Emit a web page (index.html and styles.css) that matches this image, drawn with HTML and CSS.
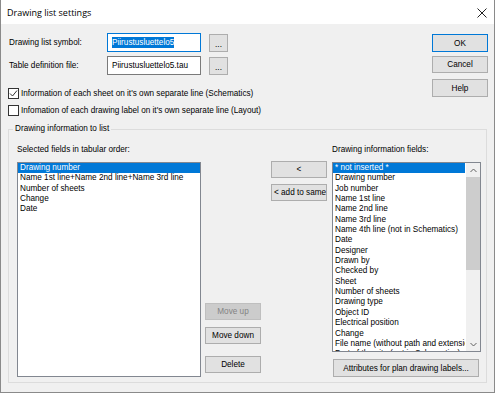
FILE: index.html
```html
<!DOCTYPE html>
<html lang="en">
<head>
    <meta charset="UTF-8">
    <title>Drawing list settings</title>
    <link rel="stylesheet" href="styles.css">
</head>
<body>
    <div class="window">
        <div class="title-bar">
            <div class="title">Drawing list settings</div>
            <svg class="close" width="10" height="10" viewBox="0 0 10 10">
                <path d="M0.5 0.5 L9.5 9.5 M9.5 0.5 L0.5 9.5" stroke="#222" stroke-width="1" fill="none"/>
            </svg>
        </div>
        <div class="content">
            <div class="top">
                <div class="form">
                    <div class="field-row">
                        <div class="field-label">Drawing list symbol:</div>
                        <div class="input focused"><span class="selected-text">Piirustusluettelo5</span></div>
                        <button class="btn browse">...</button>
                    </div>
                    <div class="field-row second">
                        <div class="field-label">Table definition file:</div>
                        <div class="input">Piirustusluettelo5.tau</div>
                        <button class="btn browse">...</button>
                    </div>
                    <div class="check-row first">
                        <div class="checkbox">
                            <svg width="9" height="9" viewBox="0 0 9 9">
                                <path d="M1 4.5 L3.5 7 L8 1.5" stroke="#333" stroke-width="1" fill="none"/>
                            </svg>
                        </div>
                        <div class="check-label">Information of each sheet on it's own separate line (Schematics)</div>
                    </div>
                    <div class="check-row">
                        <div class="checkbox"></div>
                        <div class="check-label">Infomation of each drawing label on it's own separate line (Layout)</div>
                    </div>
                </div>
                <div class="side-buttons">
                    <button class="btn side default">OK</button>
                    <button class="btn side cancel">Cancel</button>
                    <button class="btn side help">Help</button>
                </div>
            </div>

            <fieldset class="group">
                <legend class="group-title">Drawing information to list</legend>
                <div class="group-body">
                    <div class="col col-selected">
                        <div class="col-label">Selected fields in tabular order:</div>
                        <div class="list list-selected">
                            <div class="item active">Drawing number</div>
                            <div class="item">Name 1st line+Name 2nd line+Name 3rd line</div>
                            <div class="item">Number of sheets</div>
                            <div class="item">Change</div>
                            <div class="item">Date</div>
                        </div>
                    </div>
                    <div class="col col-move">
                        <button class="btn small move-up" disabled>Move up</button>
                        <button class="btn small move-down">Move down</button>
                        <button class="btn small delete">Delete</button>
                    </div>
                    <div class="col col-add">
                        <button class="btn small add">&lt;</button>
                        <button class="btn small add-same">&lt; add to same</button>
                    </div>
                    <div class="col col-fields">
                        <div class="col-label">Drawing information fields:</div>
                        <div class="list list-fields">
                            <div class="items">
                                <div class="item active">* not inserted *</div>
                                <div class="item">Drawing number</div>
                                <div class="item">Job number</div>
                                <div class="item">Name 1st line</div>
                                <div class="item">Name 2nd line</div>
                                <div class="item">Name 3rd line</div>
                                <div class="item">Name 4th line (not in Schematics)</div>
                                <div class="item">Date</div>
                                <div class="item">Designer</div>
                                <div class="item">Drawn by</div>
                                <div class="item">Checked by</div>
                                <div class="item">Sheet</div>
                                <div class="item">Number of sheets</div>
                                <div class="item">Drawing type</div>
                                <div class="item">Object ID</div>
                                <div class="item">Electrical position</div>
                                <div class="item">Change</div>
                                <div class="item">File name (without path and extension)</div>
                                <div class="item">Part of the site (not in Schematics)</div>
                            </div>
                            <div class="scrollbar">
                                <div class="arrow">
                                    <svg width="7" height="5" viewBox="0 0 7 5">
                                        <path d="M0.5 4 L3.5 1 L6.5 4" stroke="#606060" stroke-width="1" fill="none"/>
                                    </svg>
                                </div>
                                <div class="track"><div class="thumb"></div></div>
                                <div class="arrow">
                                    <svg width="7" height="5" viewBox="0 0 7 5">
                                        <path d="M0.5 1 L3.5 4 L6.5 1" stroke="#606060" stroke-width="1" fill="none"/>
                                    </svg>
                                </div>
                            </div>
                        </div>
                        <button class="btn attributes">Attributes for plan drawing labels...</button>
                    </div>
                </div>
            </fieldset>
        </div>
    </div>
</body>
</html>
```

FILE: styles.css
```css
body {
    margin: 0;
    width: 495px;
    height: 393px;
    overflow: hidden;
    font-family: "Liberation Sans", Arial, sans-serif;
    font-size: 8.2px;
    color: #000;
}
.window {
    width: 495px;
    height: 393px;
    box-sizing: border-box;
    border: 1px solid #8a8a8a;
    border-top: none;
    background-color: #f0f0f0;
    display: flex;
    flex-direction: column;
}
.title-bar {
    height: 24px;
    background-color: #fff;
    display: flex;
    align-items: center;
    justify-content: space-between;
    padding: 0 7px 0 6px;
}
.title {
    font-family: "Open Sans", "Noto Sans", sans-serif;
    font-size: 9px;
}
.close {
    margin-top: 1px;
}
.content {
    padding-left: 7px;
    padding-right: 6px;
}
.top {
    display: flex;
    justify-content: space-between;
}
.form {
    padding-top: 9px;
}
.field-row {
    display: flex;
    align-items: center;
    height: 19px;
}
.field-row.second {
    margin-top: 4px;
}
.field-label {
    width: 99px;
    padding-left: 1px;
    box-sizing: border-box;
}
.input {
    width: 94px;
    height: 19px;
    box-sizing: border-box;
    border: 1px solid #7a7a7a;
    background-color: #fff;
    padding-left: 4px;
    line-height: 17px;
    white-space: nowrap;
    overflow: hidden;
}
.input.focused {
    border-color: #0078d7;
}
.selected-text {
    background-color: #0078d7;
    color: #fff;
    padding: 1px 0;
}
.btn {
    font-family: inherit;
    font-size: inherit;
    color: #000;
    background-color: #e1e1e1;
    border: 1px solid #adadad;
    margin: 0;
    padding: 0 2px;
    box-sizing: border-box;
    white-space: nowrap;
    overflow: hidden;
}
.btn:disabled {
    background-color: #cccccc;
    border-color: #bfbfbf;
    color: #838383;
}
.browse {
    width: 19px;
    height: 18px;
    margin-left: 8px;
    padding-top: 3px;
}
.check-row {
    display: flex;
    align-items: center;
    height: 12px;
    margin-top: 5px;
}
.check-row.first {
    margin-top: 12px;
}
.checkbox {
    width: 11px;
    height: 11px;
    box-sizing: border-box;
    border: 1px solid #333;
    background-color: #fff;
    display: flex;
    align-items: center;
    justify-content: center;
}
.check-label {
    margin-left: 2px;
}
.side-buttons {
    display: flex;
    flex-direction: column;
    padding-top: 10px;
}
.side {
    width: 56px;
    height: 18px;
}
.side.default {
    border-color: #0078d7;
}
.side.cancel {
    margin-top: 4px;
    height: 17px;
}
.side.help {
    margin-top: 6px;
}
.group {
    margin: 8px 0 0 0;
    padding: 0;
    width: 479px;
    height: 259px;
    box-sizing: border-box;
    border: 1px solid #dcdcdc;
}
.group-title {
    margin-left: 4px;
    padding: 0 2px;
    line-height: 10px;
}
.group-body {
    display: flex;
    padding: 11px 0 0 8px;
}
.col {
    display: flex;
    flex-direction: column;
    align-items: flex-start;
}
.col-label {
    line-height: 10px;
    margin-bottom: 7px;
}
.list {
    background-color: #fff;
    border: 1px solid #828790;
    box-sizing: border-box;
    overflow: hidden;
}
.item {
    line-height: 10.35px;
    height: 10.35px;
    padding-left: 2px;
    white-space: nowrap;
    overflow: hidden;
}
.item.active {
    background-color: #0078d7;
    color: #fff;
}
.col-selected {
    width: 184px;
}
.list-selected {
    width: 184px;
    height: 215px;
}
.col-move {
    width: 56px;
    margin-left: 4px;
}
.small {
    width: 56px;
    height: 17px;
}
.move-up {
    margin-top: 158px;
}
.move-down {
    margin-top: 7px;
}
.delete {
    margin-top: 12px;
}
.col-add {
    width: 56px;
    margin-left: 10px;
}
.add {
    margin-top: 16px;
}
.add-same {
    margin-top: 6px;
    text-align: left;
}
.col-fields {
    width: 149px;
    margin-left: 5px;
}
.list-fields {
    width: 149px;
    height: 190px;
    display: flex;
}
.items {
    flex: 1;
    overflow: hidden;
}
.scrollbar {
    width: 14px;
    margin-left: 1px;
    display: flex;
    flex-direction: column;
    background-color: #f0f0f0;
}
.arrow {
    height: 14px;
    display: flex;
    align-items: center;
    justify-content: center;
}
.track {
    flex: 1;
}
.thumb {
    height: 93px;
    background-color: #cdcdcd;
}
.attributes {
    width: 146px;
    height: 18px;
    margin-top: 7px;
    margin-left: 1px;
}
```
